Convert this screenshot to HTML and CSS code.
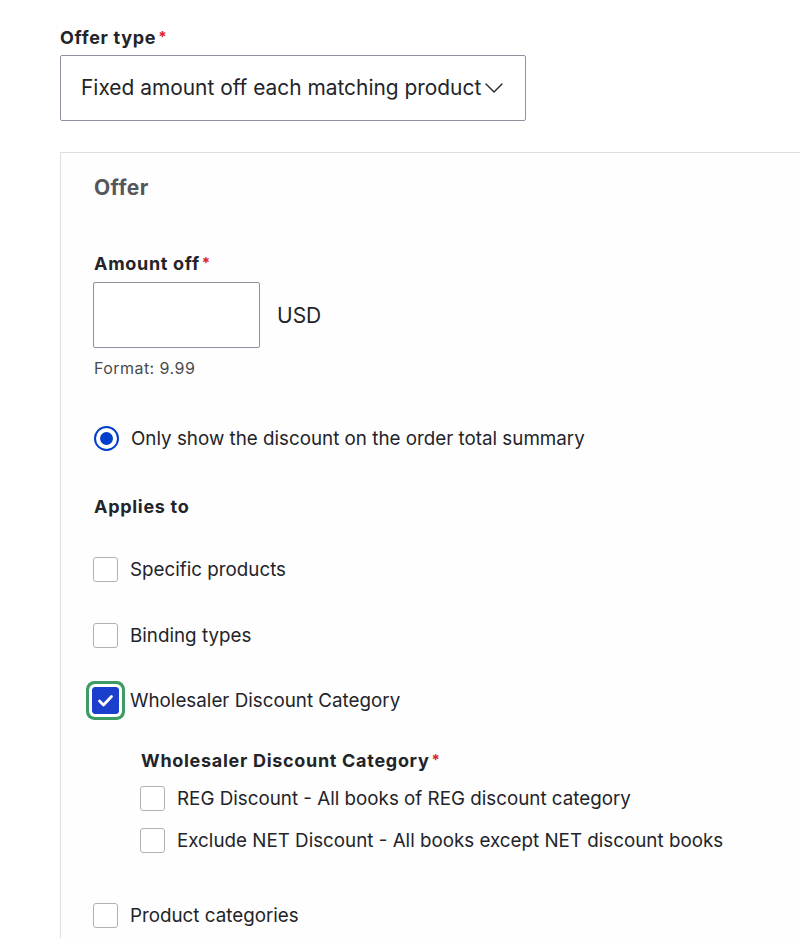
FILE: index.html
```html
<!DOCTYPE html>
<html lang="en">
<head>
<meta charset="utf-8">
<title>Offer</title>
<link rel="stylesheet" href="styles.css">
</head>
<body>
<div class="page">
  <div class="field-label">Offer type<span class="req">*</span></div>
  <div class="select">
    <span class="select-text">Fixed amount off each matching product</span>
    <svg class="chevron" width="18" height="10" viewBox="0 0 18 10"><path d="M1 1l8 8 8-8" fill="none" stroke="#232429" stroke-width="1.4" stroke-linecap="round" stroke-linejoin="round"/></svg>
  </div>

  <div class="panel">
    <div class="legend">Offer</div>

    <div class="field-label amount-label">Amount off<span class="req">*</span></div>
    <div class="amount-row">
      <div class="text-input"></div>
      <span class="unit">USD</span>
    </div>
    <div class="description">Format: 9.99</div>

    <div class="option radio-row">
      <span class="radio"><span class="radio-dot"></span></span>
      <span class="option-text">Only show the discount on the order total summary</span>
    </div>

    <div class="field-label applies">Applies to</div>

    <div class="option cb-row first">
      <span class="checkbox"></span>
      <span class="option-text">Specific products</span>
    </div>
    <div class="option cb-row">
      <span class="checkbox"></span>
      <span class="option-text">Binding types</span>
    </div>
    <div class="option cb-row checked-row">
      <span class="checkbox checked">
        <svg width="17" height="13" viewBox="0 0 17 13"><path d="M2.5 7l4 4L14.5 2.5" fill="none" stroke="#fff" stroke-width="2.8" stroke-linecap="round" stroke-linejoin="round"/></svg>
      </span>
      <span class="option-text">Wholesaler Discount Category</span>
    </div>

    <div class="nested">
      <div class="field-label">Wholesaler Discount Category<span class="req">*</span></div>
      <div class="option sub-row first">
        <span class="checkbox"></span>
        <span class="option-text">REG Discount - All books of REG discount category</span>
      </div>
      <div class="option sub-row">
        <span class="checkbox"></span>
        <span class="option-text">Exclude NET Discount - All books except NET discount books</span>
      </div>
    </div>

    <div class="option cb-row last">
      <span class="checkbox"></span>
      <span class="option-text">Product categories</span>
    </div>
  </div>
</div>
</body>
</html>
```

FILE: styles.css
```css
html, body {
  margin: 0;
  padding: 0;
  background: #fff;
}
body {
  font-family: Inter, "Liberation Sans", Arial, sans-serif;
  color: #232429;
  overflow: hidden;
}
.page {
  padding: 26px 0 0 60px;
}
.field-label {
  font-size: 18px;
  line-height: 22px;
  font-weight: 700;
  letter-spacing: 0.7px;
  color: #232429;
}
.req {
  color: #dc2323;
  margin-left: 2px;
  font-size: 15px;
  letter-spacing: 0;
  vertical-align: 2px;
}
.select {
  margin-top: 6px;
  box-sizing: border-box;
  width: 466px;
  height: 66px;
  border: 1px solid #8e929c;
  border-radius: 2px;
  display: flex;
  align-items: center;
  padding-left: 20px;
  gap: 4px;
}
.select-text {
  font-size: 20.9px;
  line-height: 24px;
  white-space: nowrap;
}
.chevron {
  flex: none;
}
.panel {
  margin-top: 31px;
  border: 1px solid #dedfe4;
  border-right: none;
  border-bottom: none;
  padding: 22px 0 40px 33px;
  min-height: 900px;
  background: #fefefe;
}
.legend {
  font-size: 21px;
  line-height: 26px;
  font-weight: 700;
  letter-spacing: 0.4px;
  color: #55565b;
}
.amount-label {
  margin-top: 51px;
}
.amount-row {
  margin-top: 7px;
  display: flex;
  align-items: center;
  gap: 17px;
}
.text-input {
  box-sizing: border-box;
  width: 167px;
  height: 66px;
  border: 1px solid #8e929c;
  border-radius: 2px;
  margin-left: -1px;
  background: #fff;
}
.unit {
  font-size: 21px;
}
.description {
  margin-top: 10px;
  font-size: 16px;
  line-height: 20px;
  letter-spacing: 0.45px;
  color: #4a4b50;
}
.option {
  display: flex;
  align-items: center;
  height: 25px;
}
.option-text {
  font-size: 18.8px;
  line-height: 24px;
  margin-left: 12px;
  white-space: nowrap;
}
.radio-row {
  margin-top: 48px;
}
.radio {
  box-sizing: border-box;
  width: 25px;
  height: 25px;
  border: 2px solid #003ecc;
  border-radius: 50%;
  display: flex;
  align-items: center;
  justify-content: center;
  background: #fff;
}
.radio-dot {
  width: 13px;
  height: 13px;
  border-radius: 50%;
  background: #003ecc;
}
.applies {
  margin-top: 45px;
}
.checkbox {
  flex: none;
  box-sizing: border-box;
  width: 25px;
  height: 25px;
  border: 1px solid #b0b2b8;
  border-radius: 3px;
  background: #fff;
  margin-left: -1px;
  display: flex;
  align-items: center;
  justify-content: center;
}
.checkbox.checked {
  width: 27px;
  height: 27px;
  margin-left: -2px;
  margin-right: -1px;
  background: #1b3fcd;
  border: 1px solid #1b3fcd;
  box-shadow: 0 0 0 3px #fff, 0 0 0 6px #3c9c64;
  border-radius: 3px;
}
.cb-row {
  margin-top: 41px;
}
.cb-row.first {
  margin-top: 39px;
}
.cb-row.checked-row {
  margin-top: 40px;
}
.nested {
  margin-left: 47px;
  margin-top: 36px;
}
.sub-row {
  margin-top: 17px;
}
.sub-row.first {
  margin-top: 14px;
}
.cb-row.last {
  margin-top: 50px;
}
```
